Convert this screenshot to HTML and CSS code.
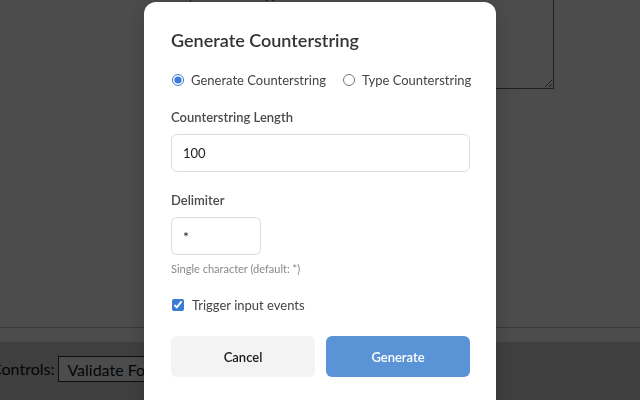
FILE: index.html
```html
<!DOCTYPE html>
<html lang="en">
<head>
    <meta charset="UTF-8">
    <meta name="viewport" content="width=device-width, initial-scale=1.0">
    <title>Generate Counterstring</title>
    <link rel="stylesheet" href="styles.css">
</head>
<body>
    <div class="page">
        <div class="workspace">
            <textarea class="notes">Notes for the form under test
Paste or type the test data here</textarea>
        </div>
        <div class="controls">
            <label class="controls-label">Controls:</label>
            <select class="controls-select">
                <option>Validate Form Fields</option>
            </select>
        </div>
    </div>

    <div class="overlay">
        <div class="modal">
            <h2 class="modal-title">Generate Counterstring</h2>

            <div class="mode-row">
                <label class="choice">
                    <input type="radio" name="mode" checked>
                    <span>Generate Counterstring</span>
                </label>
                <label class="choice">
                    <input type="radio" name="mode">
                    <span>Type Counterstring</span>
                </label>
            </div>

            <div class="field">
                <label class="field-label" for="lengthInput">Counterstring Length</label>
                <input type="text" id="lengthInput" class="text-input" value="100">
            </div>

            <div class="field">
                <label class="field-label" for="delimiterInput">Delimiter</label>
                <input type="text" id="delimiterInput" class="text-input small" value="*">
                <div class="hint">Single character (default: *)</div>
            </div>

            <label class="choice check-row">
                <input type="checkbox" checked>
                <span>Trigger input events</span>
            </label>

            <div class="actions">
                <button class="btn btn-cancel">Cancel</button>
                <button class="btn btn-primary">Generate</button>
            </div>
        </div>
    </div>
</body>
</html>
```

FILE: styles.css
```css
body {
    margin: 0;
    font-family: Lato, "Noto Sans", sans-serif;
    background: white;
    overflow: hidden;
}

/* page behind the dialog */
.workspace {
    display: flow-root;
    height: 327px;
    border-bottom: 1px solid #bdbdbd;
}

.notes {
    display: block;
    box-sizing: border-box;
    width: 364px;
    height: 129px;
    margin: -40px 0 0 190px;
    padding: 3px 10px;
    border: 1px solid #646464;
    font-family: Lato, sans-serif;
    font-size: 15px;
    line-height: 19px;
    color: #111;
    background: white;
}

.controls {
    margin-top: 14px;
    height: 58px;
    background: #d4d4d4;
    display: flex;
    align-items: flex-start;
    padding-top: 14px;
    box-sizing: border-box;
}

.controls-label {
    margin-left: -9px;
    margin-right: 4px;
    font-size: 16px;
    line-height: 26px;
    color: #111;
    white-space: nowrap;
}

.controls-select {
    height: 26px;
    width: 170px;
    border: 1px solid #333;
    border-radius: 0;
    background: white;
    font-family: Lato, sans-serif;
    font-size: 16px;
    color: #111;
    padding: 0 4px;
}

/* dialog */
.overlay {
    position: fixed;
    inset: 0;
    background: rgba(0, 0, 0, 0.7);
    display: flex;
    justify-content: center;
    align-items: flex-start;
    padding-top: 2px;
}

.modal {
    width: 352px;
    height: 420px;
    box-sizing: border-box;
    background: white;
    border-radius: 12px;
    padding: 26px 26px 26px 27px;
    box-shadow: 0 4px 24px rgba(0, 0, 0, 0.2);
}

.modal-title {
    margin: 0 0 19px;
    font-size: 18px;
    line-height: 24px;
    font-weight: 600;
    color: #333;
}

.mode-row {
    display: flex;
    gap: 16px;
    margin-bottom: 19px;
}

.choice {
    display: flex;
    align-items: center;
    gap: 7px;
    font-size: 13px;
    line-height: 18px;
    color: #444;
    white-space: nowrap;
}

.choice input {
    width: 12px;
    height: 12px;
    margin: 0 0 0 1px;
    accent-color: #3a7bd5;
}

.field {
    margin-bottom: 19px;
}

.field-label {
    display: block;
    margin-bottom: 8px;
    font-size: 13px;
    line-height: 18px;
    font-weight: 600;
    color: #4a4a4a;
}

.text-input {
    display: block;
    box-sizing: border-box;
    width: 100%;
    height: 38px;
    padding: 0 11px;
    border: 1px solid #dcdcdc;
    border-radius: 6px;
    font-family: inherit;
    font-size: 13px;
    color: #222;
    outline: none;
}

.text-input.small {
    width: 90px;
    font-size: 14px;
}

.hint {
    margin-top: 6px;
    font-size: 11px;
    line-height: 15px;
    color: #888;
}

.check-row {
    margin-top: 20px;
    margin-bottom: 22px;
    gap: 8px;
}

.actions {
    display: flex;
    gap: 11px;
}

.btn {
    flex: 1;
    height: 41px;
    border: none;
    border-radius: 6px;
    font-family: inherit;
    font-size: 13px;
    font-weight: 600;
    cursor: pointer;
}

.btn-cancel {
    background: #f3f3f3;
    color: #1a1a1a;
}

.btn-primary {
    background: #5a94d6;
    color: white;
}
```
